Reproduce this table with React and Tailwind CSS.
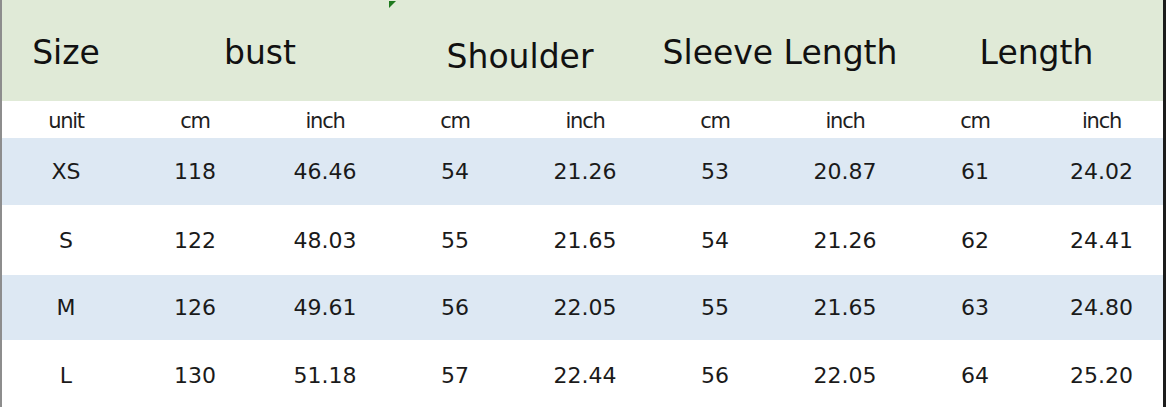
const font = { fontFamily: '"DejaVu Sans", Verdana, sans-serif' }

const rows = [
  { size: 'XS', vals: ['118', '46.46', '54', '21.26', '53', '20.87', '61', '24.02'], bg: 'bg-[#dde8f3]', h: 'h-[67px]' },
  { size: 'S', vals: ['122', '48.03', '55', '21.65', '54', '21.26', '62', '24.41'], bg: 'bg-white', h: 'h-[70px]' },
  { size: 'M', vals: ['126', '49.61', '56', '22.05', '55', '21.65', '63', '24.80'], bg: 'bg-[#dde8f3]', h: 'h-[65px]' },
  { size: 'L', vals: ['130', '51.18', '57', '22.44', '56', '22.05', '64', '25.20'], bg: 'bg-white', h: 'h-[67px] pt-1' },
]

const cols = 'grid grid-cols-[128px_repeat(7,130px)_123px]'

export default function App() {
  return (
    <div className="w-[1168px] h-[407px] overflow-hidden bg-white" style={font}>
      <div className="relative w-[1166px] h-[407px] border-l-2 border-l-[#8d8d8d] border-r-[3px] border-r-[#1c1c1c]">
        <svg className="absolute left-[385px] top-0" width="12" height="10" viewBox="0 0 12 10">
          <polygon points="2,1 9,1 2,8" fill="#1f7a1f" />
        </svg>

        <div className={`${cols} h-[101px] bg-[#e0ead7] text-[33px] text-[#111] items-center pt-1`}>
          <div className="text-center">Size</div>
          <div className="col-span-2 text-center">bust</div>
          <div className="col-span-2 text-center pt-2">Shoulder</div>
          <div className="col-span-2 text-center">Sleeve Length</div>
          <div className="col-span-2 text-center">Length</div>
        </div>

        <div className={`${cols} h-[37px] items-center text-[21px] tracking-[-0.06em] text-[#1e1e1e] pt-1`}>
          <div className="text-center">unit</div>
          {['cm', 'inch', 'cm', 'inch', 'cm', 'inch', 'cm', 'inch'].map((u, i) => (
            <div key={i} className="text-center">{u}</div>
          ))}
        </div>

        {rows.map((r) => (
          <div key={r.size} className={`${cols} ${r.h} ${r.bg} items-center text-[22px] text-[#1a1a1a]`}>
            <div className="text-center">{r.size}</div>
            {r.vals.map((v, i) => (
              <div key={i} className="text-center">{v}</div>
            ))}
          </div>
        ))}
      </div>
    </div>
  )
}
